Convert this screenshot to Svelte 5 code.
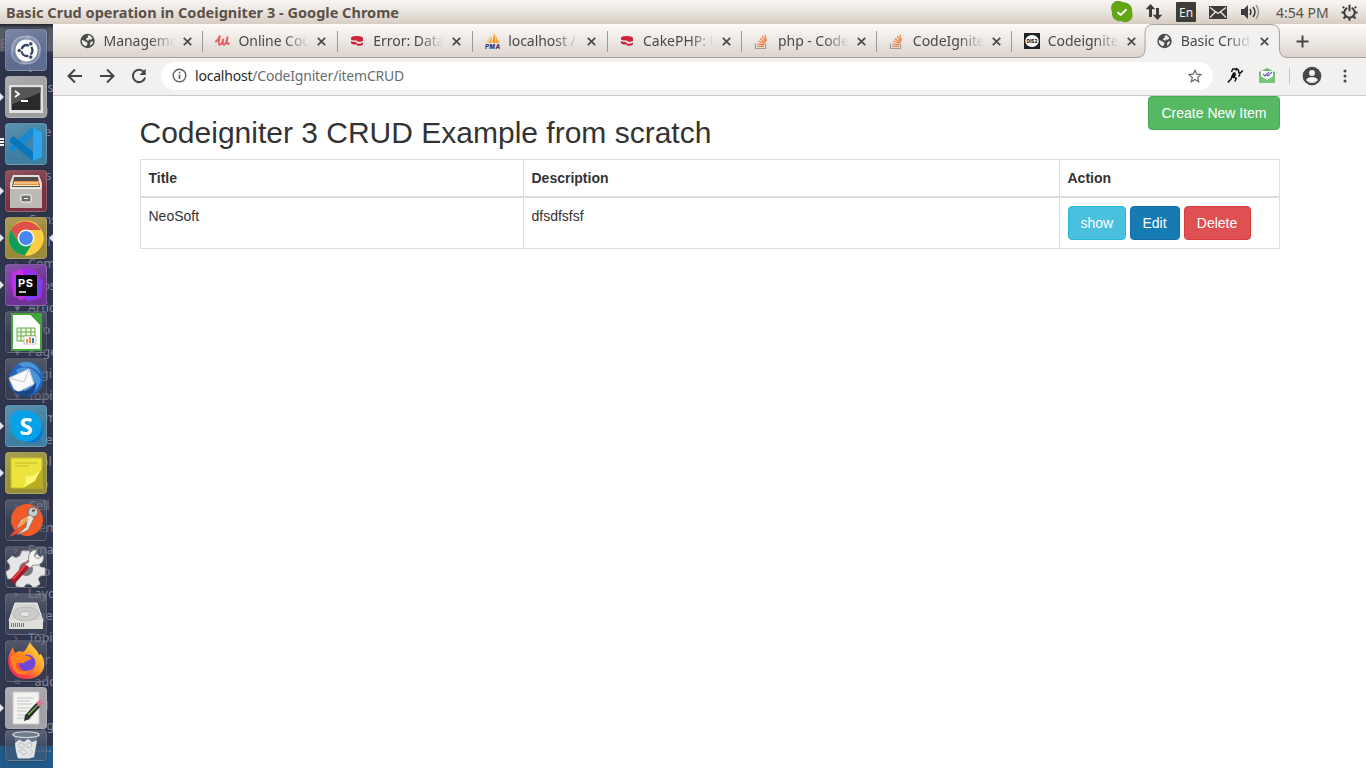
<script>
  const tabs = [
    { icon: 'globe', title: 'Management' },
    { icon: 'udemy', title: 'Online Courses' },
    { icon: 'cake', title: 'Error: Database' },
    { icon: 'pma', title: 'localhost / loc' },
    { icon: 'cake', title: 'CakePHP: Un' },
    { icon: 'stack', title: 'php - Codeig' },
    { icon: 'stack', title: 'CodeIgniter' },
    { icon: 'dev', title: 'Codeigniter' },
    { icon: 'globe', title: 'Basic Crud o', active: true }
  ];

  const apps = [
    { id: 'ubuntu', bg: '#647298' },
    { id: 'terminal', bg: '#aaa8aa', run: true },
    { id: 'code', bg: '#4086aa', run: true, multi: true },
    { id: 'files', bg: '#84323f', run: true },
    { id: 'chrome', bg: '#a99139', run: true, focus: true },
    { id: 'phpstorm', bg: '#74349c', run: true },
    { id: 'calc', bg: '#3f4553', clear: true },
    { id: 'mail', bg: '#3f4759', clear: true },
    { id: 'skype', bg: '#4087ab', run: true },
    { id: 'notes', bg: '#a49832', run: true },
    { id: 'postman', bg: '#3c4456', clear: true },
    { id: 'settings', bg: '#3d4353', clear: true },
    { id: 'disk', bg: '#474e5f', clear: true },
    { id: 'firefox', bg: '#3b4054', clear: true },
    { id: 'gedit', bg: '#afacaf', run: true },
    { id: 'trash', bg: '#4a5a70', clear: true }
  ];

  const tree = [
    ['E', 'C'], ['', '['], ['', '      s'], ['', '   in'], ['', '     e'], ['⌄', ''], ['', '   ns'], ['⌄', ''],
    ['', 'Conso'], ['', '   tri'], ['›', 'Com'], ['', '  pos'], ['▾', 'Artic'], ['', '   ro'], ['▾', 'Page'],
    ['', '    gi'], ['▾', 'Topi'], ['', '   em'], ['', '    te'], ['', '    ol'], ['⌄', '    p'], ['›', 'Cell'],
    ['', '  tem'], ['›', 'Ema'], ['', '   ro'], ['›', 'Layo'], ['', '   ge'], ['›', 'Topi'], ['', '   er'],
    ['≈', '  add'], ['', '    g'], ['≈', '  reg'], ['›', ' ......']
  ];
</script>

{#snippet favicon(name)}
  {#if name === 'globe'}
    <svg class="fav" viewBox="0 0 16 16"><circle cx="7.500" cy="8" r="7.200" fill="#484a4c" /><path d="M2 6.800 5.500 8.500l2 1.200-.2 1.800L6 13.300C3 12.500 1.200 9.500 2 6.800ZM7.700 2.500 9.500 2.300l2 1.600 1 1.400-1.600 1.500-1.800-.2L8.200 8 6 6.600l.4-1.400 1.600-.8ZM13 8.200c0 2-1.200 3.700-2.800 4.600l-.2-2.500 1.200-1.800Z" fill="#eee9e5" /></svg>
  {:else if name === 'udemy'}
    <svg class="fav" viewBox="0 0 16 16"><path d="M.8 8.500C2.600 7.300 4 5.300 4.800 3.200 3.800 6.500 3 11.500 4.600 11.800 6.200 12 7.400 9.200 8.200 6.500 7.600 9.500 7.700 12 9.200 11.800 10.600 11.500 11.800 7.500 12.500 4.300 11.500 8.500 11.800 12.500 14 10.300" fill="none" stroke="#ec5a62" stroke-width="1.900" stroke-linecap="round" stroke-linejoin="round" /></svg>
  {:else if name === 'cake'}
    <svg class="fav" viewBox="0 0 16 16"><path d="M1 5c0-2.700 11.500-2.700 12 0v2.700c-1 1.200-4 1.300-5.200.8L6.700 7.500C4.500 7.700 2 7.300 1 6.500Z" fill="#cc2339" /><path d="M1 8c1.400.9 3.300 1.100 5 .9l1 1.800c2 .2 4.600 0 6-1.200v1.800c-1.300 1.600-4.200 1.800-6 1.200L6 11.300c-2.300.3-4.300-.2-5-1.400Z" fill="#cc2339" /></svg>
  {:else if name === 'pma'}
    <svg class="fav pma" viewBox="0 0 16 16"><path d="M5.500 1 4 10H1Z" fill="#fbcf8f" /><path d="M7 2.200 6.400 10H3.500Z" fill="#faa843" /><path d="M9 0l4 7 2 3H7.300Z" fill="#f7941e" /><path d="m10 1 1 9M12 5l2 5" stroke="#ffe1b6" stroke-width=".7" /><text x="0" y="15.500" textLength="15" font-size="6">PMA</text></svg>
  {:else if name === 'stack'}
    <svg class="fav" viewBox="0 0 16 16"><path d="M1.500 10.500v5h10v-5" fill="none" stroke="#9a9da1" stroke-width="1.200" /><path d="M3.200 13.300h6.800M3.500 10.800l6.700 1M4.400 8l6.300 2.400M5.800 5.400l5.500 4.100M8 3.200l4 5.400M10.800 1.700l1.500 6.300" stroke="#f48245" stroke-width="1.300" /></svg>
  {:else}
    <svg class="fav" viewBox="0 0 16 16"><path fill="#202326" d="M0 0h16v16H0z" /><ellipse cx="8" cy="8" rx="6.800" ry="6" fill="#fff" /><text x="2.500" y="9.700" textLength="11" lengthAdjust="spacingAndGlyphs" font-size="4.800" fill="#222" font-weight="800" font-family="Inter, sans-serif">DIS2</text></svg>
  {/if}
{/snippet}

{#snippet appIcon(name)}
  <svg class="glyph" viewBox="0 0 40 40" preserveAspectRatio={name === 'trash' ? 'none' : 'xMidYMid'}>
    {#if name === 'ubuntu'}
      <circle cx="20" cy="20" r="14" fill="#fff" opacity=".16" />
      <path d="M6 20C6 9 15 4 24 8M20 34C9 34 3 26 7 17M34 20c0 11-9 16-18 12M20 6c10 0 17 9 13 18" fill="none" stroke="#e5e9f5" stroke-width="1.600" opacity=".4" />
      <circle cx="20.500" cy="20.500" r="11" fill="#fff" /><circle cx="21" cy="20.500" r="5.500" fill="none" stroke="#354567" stroke-width="2.400" stroke-dasharray="9.500 2.020" stroke-dashoffset="4.700" /><g fill="#354567" stroke="#fff" stroke-width=".7"><circle cx="13.300" cy="20.500" r="2.100" /><circle cx="24.800" cy="13.900" r="2.100" /><circle cx="24.800" cy="27.100" r="2.100" /></g>
    {:else if name === 'terminal'}
      <path fill="#e2e1de" d="M3 8h34v28H3z" /><path d="M5.500 10.500h29V33h-29z" fill="#292b2b" /><path d="M5.500 10.500h29v5l-29 12Z" fill="#555756" /><path d="m9 14 4 3-4 3M15 24h7" fill="none" stroke="#fff" stroke-width="1.800" />
    {:else if name === 'code'}
      <path d="m27 4 9 4v25l-9 4L13 23l-6 5-3-2v-3l21-19Z" fill="#1689d0" /><path d="m4 15 3-3 20 16v9L4 18Z" fill="#0876bc" /><path d="M27 4 36 8v25l-9 4Z" fill="#2ca5ed" /><path d="M27 13v14l-9-7Z" fill="#4086aa" />
    {:else if name === 'files'}
      <path d="M7 4h26l3 8v25H4V12Z" fill="#e3e0dc" /><path d="M8 6h24l2 10H6Z" fill="#504b47" /><path d="M8 10h25v5H7Z" fill="#ef8d42" /><path d="M8 12h24M7 14.500h26" stroke="#fff2c6" stroke-width="1" /><path d="M4 17h32v20H4Z" fill="#bdbab6" /><path d="M5 17.500h30" stroke="#f1efec" /><rect x="15" y="24" width="10" height="7" rx="1" fill="#6e6e6d" stroke="#fff" /><path d="M18 27.500h4" stroke="#fff" />
    {:else if name === 'chrome'}
      <circle cx="20" cy="20" r="17.500" fill="#ffcd40" /><path d="M20 20H37A17.500 17.500 0 0 0 4.800 11.400L12.600 24Z" fill="#de5148" /><path d="M4.800 11.400A17.500 17.500 0 0 0 19 37.500L27.500 24H12.600Z" fill="#119d59" /><path d="M20 12h15.600A17.500 17.500 0 0 1 19 37.500L27.500 24Z" fill="#ffcd40" /><circle cx="20" cy="20" r="8.500" fill="#f4f4f4" /><circle cx="20" cy="20" r="6.900" fill="#4886ee" />
    {:else if name === 'phpstorm'}
      <path d="M5 7 18 3l10 2 9 11-2 17-12 3-14-5-5-12Z" fill="#a727eb" /><path d="m6 7 9-3 10 17-9 15-9-5Z" fill="#c43bd5" opacity=".75" /><path d="m24 5 12 11-2 15-13 5Z" fill="#7544ee" /><path d="M10 10h21v21H10z" fill="#080708" /><text x="12" y="21.500" textLength="15" font-size="11" font-weight="700" fill="#fff" font-family="Inter, sans-serif">PS</text><path d="M13 27h7" stroke="#fff" stroke-width="1.500" />
    {:else if name === 'calc'}
      <path d="M6 2h19l10 10v26H6Z" fill="#fff" stroke="#41a637" stroke-width="2" /><path d="M23 1h13v14Z" fill="#42a538" /><path d="M11 16h18v13H11Z" fill="#eef8dc" stroke="#65ad4f" /><path d="M11 20h18M11 24h18M15 16v13M20 16v13M25 16v13" stroke="#65ad4f" /><path fill="#fff" stroke="#888" stroke-width=".5" d="M18 24h12v8H18z" /><path d="M20 31v-4h2v4Zm3 0v-6h2v6Z" fill="#ee923e" /><path d="M26 31v-5h2v5Z" fill="#3182bf" />
    {:else if name === 'mail'}
      <path d="M5 13C11 0 30-1 36 13c5 14-5 24-17 24C7 36-1 26 5 13Z" fill="#2265bb" /><path d="M12 5c12-6 20 1 23 11-6-8-13-9-18-8ZM10 11c10-7 21 0 25 10-2 8-7 13-16 13" fill="#4b94d8" /><path d="M3 19 23 10 28 25 12 33 8 30Z" fill="#f8f9f8" stroke="#c9ced3" /><path d="m3 19 15 4 5-13" fill="none" stroke="#c4c9cb" /><path d="M8 31c8 4 17 0 22-8 1 14-15 20-22 8Z" fill="#174889" />
    {:else if name === 'skype'}
      <circle cx="14" cy="14" r="10" fill="#159dea" /><circle cx="26" cy="26" r="10.500" fill="#0078d4" /><circle cx="20" cy="20" r="15.500" fill="#05a1e9" /><text x="20" y="28.500" text-anchor="middle" font-size="24" font-weight="700" fill="#fff" font-family="Noto Sans, sans-serif">S</text>
    {:else if name === 'notes'}
      <path d="M5 5h31v30H5Z" fill="#ece43c" stroke="#c8be27" /><path d="M9 10h22M9 13h14" stroke="#c3b72b" /><path d="M17 35c6-3 6-9 4-11 8 2 12-2 15-9v20Z" fill="#b8ad20" /><path d="M17 35c4-5 3-10 2-12 5 2 14-2 17-9L29 28Z" fill="#fbf876" />
    {:else if name === 'postman'}
      <circle cx="21" cy="20" r="16" fill="#f15a29" /><circle cx="27" cy="12" r="5" fill="#c5cdcf" stroke="#666" /><path d="m24 15-9 5-5 9 11-8-1 6-9 8 11-5 6-12Z" fill="#e4e4df" stroke="#777" stroke-width=".7" /><path d="m20 17-8 8 2 2 9-8Z" fill="#f5a64b" /><path d="m10 29-7 8 10-4Z" fill="#e64d31" /><path d="m26 11 3-1" stroke="#555" stroke-width="2" />
    {:else if name === 'settings'}
      <path d="M16 4h7l1 5 3 1 4-3 5 5-3 4 1 4 5 1v7l-5 1-2 3 2 5-6 4-4-4h-4l-3 4-7-2v-5l-3-3-5 1-2-7 4-3v-4l-3-4 5-5 4 2 4-2Z" fill="#e5e6e5" stroke="#bbb" /><circle cx="20" cy="22" r="7" fill="#747982" /><path d="m8 33 17-19" stroke="#aa1824" stroke-width="6" stroke-linecap="round" /><path d="m7 32 16-18" stroke="#e3434b" stroke-width="2" /><path d="M23 15C21 8 25 2 31 3l-3 6 4 3 5-4c2 8-4 11-10 10l-3 3-5-4Z" fill="#f1f1f0" stroke="#929493" />
    {:else if name === 'disk'}
      <path d="M9 9h22l6 18H3Z" fill="#d5d5d2" stroke="#f1f1ed" /><ellipse cx="20" cy="20" rx="13" ry="7" fill="#cbccca" stroke="#b9bab8" /><ellipse cx="19" cy="20" rx="5" ry="2.500" fill="#e4e4e2" stroke="#b5b6b4" /><path d="M3 27h34v8H3Z" fill="#ddddda" /><path d="M5 31h1m1 0h1m1 0h1m1 0h1m1 0h1m1 0h1m1 0h1" stroke="#777" stroke-width="4" />
    {:else if name === 'firefox'}
      <defs><linearGradient id="ff" x1="1" y1="0" x2="0" y2="1"><stop stop-color="#fff44f" /><stop offset=".45" stop-color="#ff9829" /><stop offset=".75" stop-color="#ff3c48" /><stop offset="1" stop-color="#e82081" /></linearGradient></defs>
      <path d="M7 6c0 2 1 4 2 6 3-2 6-2 8-1 2-1 4-4 7-10 1 4 8 8 9 13l2-1c9 15-2 25-14 25C3 38-3 20 7 6Z" fill="url(#ff)" /><circle cx="21" cy="22" r="8.500" fill="#7048d9" /><path d="M4 17c5-7 12-6 16-2 3 0 6 1 5 3l-6 3c-3 3-8-1-9 2-1 6 8 10 15 5-5 10-21 7-20-11Z" fill="#ff841b" />
    {:else if name === 'gedit'}
      <path d="M7 4h26v32H7Z" fill="#f3f3f1" stroke="#c8c8c6" /><path d="M11 10h17M11 13h13M11 16h15M11 20h17M11 23h10M11 27h17M11 30h15" stroke="#c5c7c5" /><path d="m21 29 12-13" stroke="#252a25" stroke-width="5.500" /><path d="m22 27 11-11" stroke="#83b85a" stroke-width="1.500" /><path d="m32 17 4-4" stroke="#dc79a1" stroke-width="5.500" /><path d="m18 33 1-6 5 4Z" fill="#30302d" />
    {:else}
      <path d="M8 4 11 37h17l4-33Z" fill="#859aa9" opacity=".5" /><ellipse cx="20" cy="5" rx="13" ry="4" fill="#6f7b8b" stroke="#d3d9dc" stroke-width="1.500" /><path d="m9 17 4-5 5 3 4-4 4 4 5-2-3 23-5 2H12l-2-10Z" fill="#e3e5e4" /><path d="m12 18 4-2 3 4-4 4Zm9-1 5-1-1 6-4 1Zm-8 10 5-2 3 5-4 3Zm11-1 3 3-3 4" fill="none" stroke="#b6bcbd" stroke-width="1" />
    {/if}
  </svg>
{/snippet}

<div class="desktop">
  <header class="menubar">
    <strong>Basic Crud operation in Codeigniter 3 - Google Chrome</strong>
    <div class="tray">
      <svg width="22" height="22" viewBox="0 0 22 22"><path d="M5 0c3-1 5 0 6 1 7 0 11 5 10 10 3 7-5 13-11 9C4 21 0 16 1 11-1 7 0 2 5 0Z" fill="#63a716" /><path d="m6.500 11.200 3.100 2.800 6-5.700" fill="none" stroke="#fff" stroke-width="2" /></svg>
      <svg class="updown" width="18" height="18" viewBox="0 0 18 18"><path d="M5.500 1 .7 6.200H4V14h3V6.200h3.300ZM12.500 17l-4.800-5.200H11V5h3v6.800h3.300Z" fill="#3d3c3a" /></svg>
      <span class="lang">En</span>
      <svg class="env" width="18" height="13" viewBox="0 0 18 13"><path fill="#3d3c3a" d="M0 0h18v13H0z" /><path d="m1 1.500 8 6 8-6M1 11.500 6.300 6M17 11.500 11.700 6" fill="none" stroke="#f0ebe6" stroke-width="1.200" /></svg>
      <svg class="vol" width="20" height="16" viewBox="0 0 20 16"><path d="M1 5h3l4-4v14l-4-4H1Z" fill="#3d3c3a" /><path d="M10 5q2 3 0 6M13 3q4 5 0 10" fill="none" stroke="#3d3c3a" stroke-width="1.500" /><path d="M16 1q5 7 0 14" fill="none" stroke="#96918d" stroke-width="1.400" /></svg>
      <time>4:54 PM</time>
      <svg class="gear" width="17" height="17" viewBox="0 0 17 17"><path d="M6.300 3.800a5.200 5.200 0 1 0 4.400 0" fill="none" stroke="#3d3c3a" stroke-width="2" /><path d="M8.500.8v6.400M3.200 4 1.800 2.600M13.800 4l1.400-1.400M3.200 8.500H.5M16.500 8.500h-2.700M4.500 12.500l-2 2M12.500 12.500l2 2M8.500 14v2.800" stroke="#3d3c3a" stroke-width="2" /></svg>
    </div>
  </header>

  <div class="workspace">
    <aside class="launcher">
      <div class="tree">
        {#each tree as [mark, label]}<div class="leaf"><i>{mark}</i><span>{label}</span></div>{/each}
      </div>
      <nav class="tiles">
        {#each apps as app}
          <div class="slot" class:squeezed={app.id === 'trash'}>
            {#if app.run}<b class="run" class:multi={app.multi}></b>{/if}
            <div class="tile" class:clear={app.clear} style="--tile:{app.bg}">{@render appIcon(app.id)}</div>
            {#if app.focus}<b class="focus"></b>{/if}
          </div>
        {/each}
      </nav>
    </aside>

    <section class="browser">
      <div class="tabs">
        {#each tabs as tab}
          <div class="tab" class:active={tab.active}>
            {#if tab.active}<svg class="shape" width="151" height="35" viewBox="0 0 151 35"><path d="M0 33.500Q8 33.500 8 25V9Q8 .5 16.500 .5H134Q142.500 .5 142.500 9v16Q142.500 33.500 151 33.500V35H0Z" fill="#f2f1f0" /><path d="M0 33.500Q8 33.500 8 25V9Q8 .5 16.500 .5H134Q142.500 .5 142.500 9v16Q142.500 33.500 151 33.500" fill="none" stroke="#a6a29f" /></svg>{/if}
            {@render favicon(tab.icon)}
            <span class="name">{tab.title}</span>
            <svg class="close" width="9" height="9" viewBox="0 0 9 9"><path d="m.8.8 7.400 7.400M8.200.8.8 8.200" stroke="#494a49" stroke-width="1.700" /></svg>
          </div>
        {/each}
        <svg class="plus" width="13" height="13" viewBox="0 0 13 13"><path d="M6.500.5v12M.5 6.500h12" stroke="#454746" stroke-width="2" /></svg>
      </div>

      <div class="toolbar">
        <svg class="nav" width="16" height="16" viewBox="0 0 16 16"><path d="M15 8H2M8 1.500 1.500 8 8 14.500" /></svg>
        <svg class="nav" width="16" height="16" viewBox="0 0 16 16"><path d="M1 8h13M8 1.500 14.500 8 8 14.500" /></svg>
        <svg class="nav" width="16" height="16" viewBox="0 0 16 16"><path d="M13.300 4.500A6.200 6.200 0 1 0 14.100 9.500" /><path d="M14.700.8V7H8.500Z" class="fill" /></svg>
        <div class="address">
          <svg width="15" height="15" viewBox="0 0 15 15"><circle cx="7.500" cy="7.500" r="6.300" fill="none" stroke="#5c6064" stroke-width="1.400" /><path d="M7.500 6.500V11M7.500 3.700v1.600" stroke="#5c6064" stroke-width="1.600" /></svg>
          <p><b>localhost</b>/CodeIgniter/itemCRUD</p>
          <svg class="star" width="14" height="14" viewBox="0 0 14 14"><path d="m7 1.200 1.700 4 4.300.4-3.300 2.800 1 4.300L7 10.400l-3.700 2.300 1-4.300L1 5.600l4.300-.4Z" fill="none" stroke="#65676a" stroke-width="1.200" /></svg>
        </div>
        <svg class="runner" width="17" height="17" viewBox="0 0 17 17"><path d="m4.500 5 1.300-3h2.500M7 5.500 5.500 9l3.800 2.300L7.800 14.500M5.500 8.500 4 12 .8 15.500" fill="none" stroke="#111" stroke-width="1.400" /><path d="M6 6 8.500 5.200 9 8 6.800 11.500 4 10Z" fill="#111" /><circle cx="9.500" cy="2.300" r="1.500" fill="#111" /><path d="M11.800 2.500c-.8 2.500.2 4 1.500 3.500L15.800 3.500M13 7.500l-1.500 2" fill="none" stroke="#111" stroke-width="1.500" /></svg>
        <svg class="whats" width="16" height="15" viewBox="0 0 16 15"><path d="m0 4 8-4 8 4v10q0 1-1 1H1q-1 0-1-1Z" fill="#71bd78" /><path d="M2 3h12v6l-6 3-6-3Z" fill="#fff" /><path d="m0 7 8 5 8-5v7q0 1-1 1H1q-1 0-1-1Z" fill="#79c37f" /><path d="m4 6 2 2 4-4M8 7l1 1 4-4" fill="none" stroke="#5c5dc2" stroke-width="1.100" /></svg>
        <i class="divider"></i>
        <svg class="person" width="20" height="20" viewBox="0 0 20 20"><circle cx="10" cy="10" r="9.300" fill="#454746" /><circle cx="10" cy="7" r="3" fill="#f2f1f0" /><path d="M4 14c2-4 10-4 12 0-3 4-9 4-12 0Z" fill="#f2f1f0" /></svg>
        <svg class="dots" width="4" height="14" viewBox="0 0 4 14"><g fill="#454746"><circle cx="2" cy="2" r="1.500" /><circle cx="2" cy="7" r="1.500" /><circle cx="2" cy="12" r="1.500" /></g></svg>
      </div>

      <main>
        <div class="heading">
          <h2>Codeigniter 3 CRUD Example from scratch</h2>
          <button class="btn green">Create New Item</button>
        </div>
        <table>
          <colgroup><col class="c1" /><col class="c2" /><col class="c3" /></colgroup>
          <thead><tr><th>Title</th><th>Description</th><th>Action</th></tr></thead>
          <tbody>
            <tr>
              <td>NeoSoft</td>
              <td>dfsdfsfsf</td>
              <td><div class="actions"><button class="btn cyan">show</button><button class="btn blue">Edit</button><button class="btn red">Delete</button></div></td>
            </tr>
          </tbody>
        </table>
      </main>
    </section>
  </div>
</div>

<style>
  :global(body) { margin: 0; overflow: hidden; }
  * { box-sizing: border-box; }
  svg { display: block; flex: none; }
  .desktop { width: 1366px; height: 768px; display: flex; flex-direction: column; background: #fff; overflow: hidden; }
  .menubar { height: 24px; flex: none; display: flex; align-items: center; justify-content: space-between; padding: 0 8px 0 6px; background: linear-gradient(#f8f6f4, #eeeae5 35%, #d7cdc3); color: #5b5149; font-family: "Noto Sans", sans-serif; }
  .menubar strong { margin-top: -1px; font-size: 14.500px; line-height: 24px; letter-spacing: 0.020px; white-space: nowrap; }
  .tray { display: flex; align-items: center; }
  .updown { margin-left: 12px; }
  .lang { width: 20px; height: 20px; margin-left: 13px; background: #3d3c3a; color: #f4f0ec; font-size: 12px; line-height: 21px; text-align: center; border-radius: 1px; }
  .env { margin-left: 13px; }
  .vol { margin-left: 13px; }
  .tray time { margin-left: 16px; width: 53px; font-size: 14px; white-space: nowrap; }
  .gear { margin-left: 12px; }

  .workspace { flex: 1; display: flex; min-height: 0; }
  .launcher { position: relative; width: 53px; flex: none; overflow: hidden; background: linear-gradient(#20242b 0, #555a65 5px, #5c606a 27px, #2e344b 28px, #313850 722px, #215a89 722px); }
  .tree { position: absolute; inset: 9px 0 0; color: #848a9c; font: 12.500px "Noto Sans", sans-serif; }
  .leaf { height: 22px; display: flex; white-space: pre; line-height: 22px; }
  .leaf i { flex: none; width: 28px; padding-left: 14px; font-style: normal; color: #77708d; }
  .leaf:first-child i { padding-left: 0; }
  .tiles { position: relative; padding-top: 5px; }
  .slot { height: 47px; display: flex; align-items: flex-start; }
  .slot.squeezed { height: 32px; margin-top: -4px; }
  .squeezed .tile { height: 31px; }
  .tile { width: 42px; height: 42px; margin-left: 5px; border: 1px solid rgb(210 216 224 / .22); border-radius: 4px; background: linear-gradient(155deg, rgb(255 255 255 / .16), transparent 60%), color-mix(in srgb, var(--tile) 90%, transparent); box-shadow: 0 0 2px #20263b; }
  .tile.clear { border-color: rgb(210 216 224 / .16); background: linear-gradient(rgb(255 255 255 / .14), transparent 60%), color-mix(in srgb, var(--tile) 50%, transparent); }
  .glyph { width: 40px; height: 40px; }
  .squeezed .glyph { height: 29px; }
  .run, .focus { position: absolute; width: 0; height: 0; margin-top: 17px; border: solid transparent; border-width: 4px 0 4px 4px; border-left-color: #e3e5ea; }
  .run { left: 0; }
  .run.multi { width: 4px; height: 8px; margin-top: 15px; border: 0; background: repeating-linear-gradient(#f0f1f4 0 2px, transparent 2px 3px); }
  .focus { right: 0; border-width: 4px 4px 4px 0; border-right-color: #e3e5ea; }

  .browser { flex: 1; min-width: 0; display: flex; flex-direction: column; }
  .tabs { height: 34px; flex: none; display: flex; padding-left: 15px; background: linear-gradient(#fcfbfa, #ddd5cd); border-bottom: 1px solid #a6a29f; }
  .tab { position: relative; width: 134.900px; height: 34px; flex: none; display: flex; align-items: center; padding-left: 12px; }
  .tab:not(.active)::after { content: ""; position: absolute; right: 0; top: 7px; width: 1px; height: 21px; background: #9d9996; }
  .tab:nth-child(8)::after { display: none; }
  .tab.active { padding-left: 10px; margin-right: -1px; }
  .shape { position: absolute; left: -10px; top: 0; z-index: 0; }
  .fav { position: relative; width: 16px; height: 16px; }
  .pma text { fill: #35336b; font-family: Inter, sans-serif; font-weight: 800; font-style: italic; }
  .name { position: relative; width: 71px; margin-left: 7.500px; overflow: hidden; white-space: nowrap; color: #494a49; font: 14px/20px "Noto Sans", sans-serif; letter-spacing: -0.040px; mask-image: linear-gradient(90deg, #000 46px, transparent 71px); }
  .close { position: relative; margin-left: 8px; }
  .plus { margin: 11px 0 0 15px; }

  .toolbar { height: 38px; flex: none; display: flex; align-items: center; padding: 0 0 2px 14px; background: #f2f1f0; border-bottom: 1px solid #cdcbc9; }
  .nav { margin-right: 16px; }
  .nav path { fill: none; stroke: #454746; stroke-width: 2; }
  .nav .fill { fill: #454746; stroke: none; }
  .address { width: 1052px; height: 28px; margin-left: -2px; display: flex; align-items: center; padding: 0 11px; border-radius: 14px; background: #fff; }
  .address p { margin: 0 0 0 8px; color: #6b6d70; font: 14px/28px "Noto Sans", sans-serif; letter-spacing: -0.210px; }
  .address p b { color: #292a2c; font-weight: 400; }
  .star { margin-left: auto; }
  .runner { margin-left: 14px; }
  .whats { margin-left: 15px; }
  .divider { width: 1px; height: 16px; margin-left: 14px; background: #c8c6c4; }
  .person { margin-left: 12px; }
  .dots { margin-left: 21px; }

  main { flex: 1; padding: 0 86px 0 86.500px; background: #fff; color: #333; font: 14px/20px "Liberation Sans", Arial, sans-serif; }
  .heading { display: flex; justify-content: space-between; align-items: flex-start; }
  h2 { margin: 20px 0 10px; font-size: 30px; line-height: 33px; font-weight: 400; }
  .btn { height: 34px; padding: 0 12px; border: 1px solid; border-radius: 4px; color: #fff; font: 14px/20px "Liberation Sans", Arial, sans-serif; }
  .green { width: 132px; background: #57b863; border-color: #48a957; }
  .cyan { width: 58px; background: #49c0dd; border-color: #2ab6d6; }
  .blue { width: 50px; background: #167bb5; border-color: #176da2; }
  .red { width: 67px; background: #df5052; border-color: #d73b40; }
  table { width: 1139px; table-layout: fixed; border-collapse: collapse; border: 1px solid #ddd; }
  .c1 { width: 383px; } .c2 { width: 536px; } .c3 { width: 220px; }
  th, td { border: 1px solid #ddd; padding: 8px; text-align: left; vertical-align: top; }
  th { border-bottom-width: 2px; }
  .actions { display: flex; gap: 4px; }
</style>
